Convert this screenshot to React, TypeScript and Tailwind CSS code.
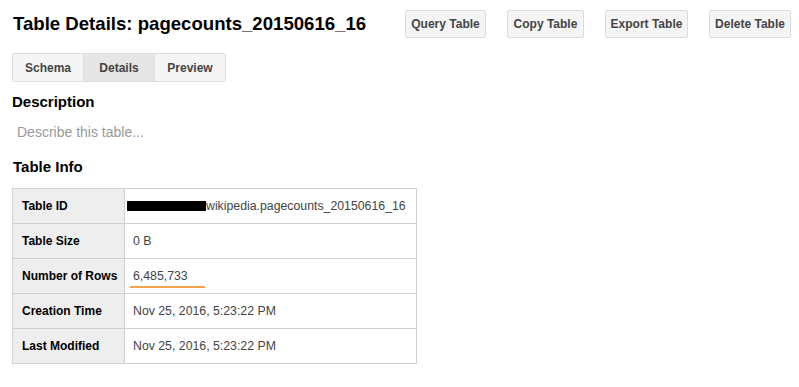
const rows: { label: string; value: React.ReactNode }[] = [
  {
    label: "Table ID",
    value: (
      <span className="flex items-center">
        <span className="-ml-[6px] inline-block h-[10px] w-[79px] bg-black" />
        <span>wikipedia.pagecounts_20150616_16</span>
      </span>
    ),
  },
  { label: "Table Size", value: "0 B" },
  {
    label: "Number of Rows",
    value: (
      <span className="relative block h-[14px] leading-[14px]">
        6,485,733
        <span className="absolute left-[-3px] top-[17px] h-[2px] w-[75px] bg-[#f57c00]/70" />
      </span>
    ),
  },
  { label: "Creation Time", value: "Nov 25, 2016, 5:23:22 PM" },
  { label: "Last Modified", value: "Nov 25, 2016, 5:23:22 PM" },
];

const actions = [
  { label: "Query Table", w: "w-[81px]" },
  { label: "Copy Table", w: "w-[77px]" },
  { label: "Export Table", w: "w-[83px]" },
  { label: "Delete Table", w: "w-[82px]" },
];
const tabs = ["Schema", "Details", "Preview"];

export default function App() {
  return (
    <div className="h-[387px] w-[799px] bg-white font-['Liberation_Sans',Arial,sans-serif] text-[#222]">
      <div className="flex items-start justify-between pl-[13px] pr-[8px] pt-[10px]">
        <h1 className="mt-[1px] whitespace-nowrap text-[18.6px] font-bold leading-[26px] text-black">
          Table Details: pagecounts_20150616_16
        </h1>
        <div className="flex shrink-0 gap-[21px]">
          {actions.map((a) => (
            <button
              key={a.label}
              className={`h-[28px] ${a.w} whitespace-nowrap rounded-[2px] border border-[#dcdcdc] bg-[#f5f5f5] text-[12px] font-bold text-[#444]`}
            >
              {a.label}
            </button>
          ))}
        </div>
      </div>

      <div className="ml-[12px] mt-[15px] flex h-[29px] w-[214px] rounded-[2px] border border-[#dcdcdc]">
        {tabs.map((t, i) => (
          <div
            key={t}
            className={`flex flex-1 items-center justify-center text-[12px] font-bold text-[#444] ${
              i > 0 ? "border-l border-[#dcdcdc]" : ""
            } ${t === "Details" ? "bg-[#e6e6e6]" : "bg-[#f5f5f5]"}`}
          >
            {t}
          </div>
        ))}
      </div>

      <h2 className="ml-[12px] mt-[10px] text-[15px] font-bold leading-[20px] text-black">Description</h2>
      <p className="ml-[17px] mt-[11px] text-[14px] leading-[18px] text-[#999]">Describe this table...</p>

      <h2 className="ml-[13px] mt-[16px] text-[15px] font-bold leading-[20px] text-black">Table Info</h2>

      <table className="ml-[12px] mt-[11px] w-[405px] border-collapse border border-[#d0d0d0] text-[12px]">
        <tbody>
          {rows.map((r) => (
            <tr key={r.label} className="h-[35px]">
              <td className="w-[112px] border border-[#d0d0d0] bg-[#eeeeee] pl-[9px] font-bold text-black">
                {r.label}
              </td>
              <td className="border border-[#d0d0d0] pl-[8px] text-[12.3px] text-[#444]">{r.value}</td>
            </tr>
          ))}
        </tbody>
      </table>
    </div>
  );
}
